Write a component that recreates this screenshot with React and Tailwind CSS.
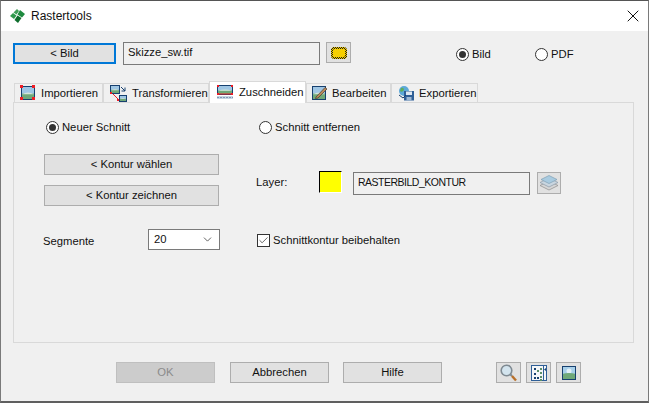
import React from 'react';
import { X, ChevronDown, Check } from 'lucide-react';

function Logo() {
  return (
    <svg width="17" height="16" viewBox="0 0 17 16" className="shrink-0">
      <path d="M8 1 L10 3 L7.5 6.5 L4.5 4.5 Z" fill="#3f9e58" />
      <path d="M11 2 L16 6 L13 9.5 L8.5 6.5 Z" fill="#1d8a3e" />
      <path d="M4 5 L7.5 7.5 L5 11 L1 8 Z" fill="#2f9a4c" />
      <path d="M8.5 7.5 L12.5 10 L9 15 L5.5 12 Z" fill="#0e6d2c" />
    </svg>
  );
}

function Landscape({ x, y, w, h }) {
  return (
    <g>
      <rect x={x} y={y} width={w} height={h} fill="#9fc6e4" />
      <rect x={x} y={y + h * 0.55} width={w} height={h * 0.45} fill="#6fa878" />
      <path d={`M${x} ${y + h * 0.6} Q${x + w / 2} ${y + h * 0.3} ${x + w} ${y + h * 0.6} Z`} fill="#d5e5d8" />
    </g>
  );
}

function ImportIcon() {
  return (
    <svg width="16" height="16" viewBox="0 0 16 16" className="shrink-0">
      <Landscape x={2} y={2} w={12} h={12} />
      <rect x="1.5" y="1.5" width="13" height="13" fill="none" stroke="#17406f" />
      {[[0, 0], [12, 0], [0, 12], [12, 12]].map(([a, b]) => (
        <rect key={`${a}-${b}`} x={a} y={b} width="3" height="3" fill="#ee1c25" />
      ))}
    </svg>
  );
}

function TransformIcon() {
  return (
    <svg width="17" height="17" viewBox="0 0 17 17" className="shrink-0">
      <Landscape x={1} y={1} w={8} h={7} />
      <rect x="0.5" y="0.5" width="9" height="8" fill="none" stroke="#17406f" />
      <Landscape x={10} y={11} w={6} h={5} />
      <rect x="9.5" y="10.5" width="7" height="6" fill="none" stroke="#17406f" />
      <path d="M11 2 L15 6 M15 2.5 V6 H11.5" fill="none" stroke="#17406f" />
      <path d="M3 9 L8 14" stroke="#ee1c25" />
      <rect x="0" y="7" width="2" height="2" fill="#ee1c25" />
      <rect x="7" y="14" width="2" height="2" fill="#ee1c25" />
    </svg>
  );
}

function CropIcon() {
  return (
    <svg width="17" height="15" viewBox="0 0 17 15" className="shrink-0">
      <Landscape x={1} y={1} w={14} h={8} />
      <rect x="0.5" y="0.5" width="15" height="9" fill="none" stroke="#17406f" />
      <path d="M0 9 H16" stroke="#ee1c25" />
      <rect x="0" y="0" width="2" height="2" fill="#ee1c25" />
      <rect x="14" y="0" width="2" height="2" fill="#ee1c25" />
      <rect x="0" y="8" width="2" height="2" fill="#ee1c25" />
      <rect x="14" y="8" width="2" height="2" fill="#ee1c25" />
      <rect x="0" y="11" width="16" height="3" fill="#c5d3e2" />
      <path d="M0 12.5 H16" stroke="#7f97b3" strokeDasharray="2 1" />
    </svg>
  );
}

function EditIcon() {
  return (
    <svg width="16" height="16" viewBox="0 0 16 16" className="shrink-0">
      <Landscape x={1} y={2} w={12} h={12} />
      <rect x="0.5" y="1.5" width="13" height="13" fill="none" stroke="#17406f" />
      <path d="M4 12 L13 2.5 L15 4 L6 13 L3.5 13.5 Z" fill="#b9895a" stroke="#4a3a2c" strokeWidth="0.7" />
    </svg>
  );
}

function ExportIcon() {
  return (
    <svg width="17" height="16" viewBox="0 0 17 16" className="shrink-0">
      <circle cx="6" cy="6" r="5" fill="#5da9d8" />
      <path d="M3 3 Q6 2 6 5 Q4 8 2 6 Z" fill="#5fae5a" />
      <rect x="6" y="6" width="10" height="9.5" fill="#2f5f97" />
      <rect x="8" y="6.5" width="6" height="3.5" fill="#dfe8f1" />
      <rect x="8.5" y="12" width="5" height="3.5" fill="#9db7d2" />
      <path d="M1 10 L5 13 L8 10" fill="none" stroke="#17406f" />
    </svg>
  );
}

function HatchIcon() {
  return (
    <svg width="16" height="12" viewBox="0 0 16 12" className="shrink-0">
      <defs>
        <pattern id="hatch" width="2" height="2" patternUnits="userSpaceOnUse">
          <rect width="2" height="2" fill="#f6cf00" />
          <rect width="1" height="1" fill="#1c1c1c" />
          <rect x="1" y="1" width="1" height="1" fill="#1c1c1c" />
        </pattern>
      </defs>
      <path d="M2 0 H14 L16 2 V10 L14 12 H2 L0 10 V2 Z" fill="url(#hatch)" />
      <path d="M3 2 H13 L14 3 V9 L13 10 H3 L2 9 V3 Z" fill="#f6cf00" />
    </svg>
  );
}

function LayersIcon() {
  return (
    <svg width="20" height="16" viewBox="0 0 20 16" className="shrink-0">
      <path d="M1 10.5 L10 6 L19 10.5 L10 15 Z" fill="#d6d6d6" stroke="#8c8c8c" strokeWidth="0.7" />
      <path d="M1 7.5 L10 3 L19 7.5 L10 12 Z" fill="#c9d6e0" stroke="#8c9aa6" strokeWidth="0.7" />
      <path d="M2 4.5 L10 0.5 L18 4.5 L10 8.5 Z" fill="#a9cbe0" stroke="#7f9fb5" strokeWidth="0.7" />
    </svg>
  );
}

function SearchIcon() {
  return (
    <svg width="17" height="18" viewBox="0 0 17 18" className="shrink-0">
      <circle cx="6.5" cy="6.5" r="5.3" fill="#d3e4ee" stroke="#7f8a92" strokeWidth="1.6" />
      <path d="M10.5 10.5 L12 12" stroke="#7f8a92" strokeWidth="2" />
      <path d="M12 12 L16 16.5" stroke="#b9702a" strokeWidth="2.4" />
    </svg>
  );
}

function ListIcon() {
  const dots = [[3, 3, '#17406f'], [6, 5, '#5b8f6a'], [9, 3, '#5b8f6a'], [3, 8, '#17406f'], [9, 7, '#5b8f6a'], [3, 12, '#17406f'], [6, 12, '#17406f'], [9, 11, '#5b8f6a'], [9, 14, '#5b8f6a']];
  return (
    <svg width="16" height="16" viewBox="0 0 16 16" className="shrink-0">
      <rect x="0.5" y="0.5" width="15" height="15" fill="#f4f6f8" stroke="#2f5f97" />
      <rect x="12" y="1" width="1" height="14" fill="#2f5f97" />
      <path d="M15 3 L13 4.5 L15 6 Z" fill="#17406f" />
      {dots.map(([x, y, c]) => <rect key={`${x}-${y}`} x={x} y={y} width="2" height="2" fill={c} />)}
    </svg>
  );
}

function PictureIcon() {
  return (
    <svg width="14" height="14" viewBox="0 0 14 14" className="shrink-0">
      <rect x="0" y="0" width="14" height="14" fill="#a8d0ea" />
      <circle cx="7" cy="5" r="2.5" fill="#e3f0f7" />
      <path d="M0 8 Q7 6 14 8 V14 H0 Z" fill="#6fa878" />
      <rect x="0.5" y="0.5" width="13" height="13" fill="none" stroke="#17406f" />
    </svg>
  );
}

function Radio({ checked, label, className }) {
  return (
    <div className={`flex items-center h-[14px] ${className}`}>
      <span className="w-[13px] h-[13px] rounded-full border border-[#333] bg-white flex items-center justify-center shrink-0">
        {checked && <span className="w-[7px] h-[7px] rounded-full bg-[#333]" />}
      </span>
      <span className="ml-[3px]">{label}</span>
    </div>
  );
}

function Button({ label, className }) {
  return (
    <div className={`border border-[#adadad] bg-[#e1e1e1] flex items-center justify-center ${className}`}>
      {label}
    </div>
  );
}

function IconButton({ children, className }) {
  return (
    <div className={`border border-[#adadad] bg-[#e1e1e1] flex items-center justify-center ${className}`}>
      {children}
    </div>
  );
}

const tabs = [
  { label: 'Importieren', icon: <ImportIcon />, width: 'w-[89px]', gap: 'gap-[5px] pl-[5px]' },
  { label: 'Transformieren', icon: <TransformIcon />, width: 'w-[106px]', gap: 'gap-[5px] pl-[6px]' },
  { label: 'Zuschneiden', icon: <CropIcon />, width: 'w-[97px]', gap: 'gap-[5px] pl-[7px]', active: true },
  { label: 'Bearbeiten', icon: <EditIcon />, width: 'w-[85px]', gap: 'gap-[4px] pl-[5px]' },
  { label: 'Exportieren', icon: <ExportIcon />, width: 'w-[87px]', gap: 'gap-[4px] pl-[6px]' },
];

export default function App() {
  return (
    <div className="w-[649px] h-[403px] flex flex-col overflow-hidden bg-[#f0f0f0] border-t border-l border-r border-b-2 border-t-[#555] border-l-[#7a7a7a] border-r-[#7a7a7a] border-b-[#5f5f5f] text-[11.25px] text-[#111] font-['Liberation_Sans',sans-serif]">
      {/* Titelleiste */}
      <div className="h-[30px] shrink-0 bg-white flex items-center pl-[8px] pr-[5px]">
        <Logo />
        <span className="ml-[5px] text-[12px]">Rastertools</span>
        <X size={20} strokeWidth={1.2} className="ml-auto" />
      </div>

      {/* Bildauswahl */}
      <div className="flex items-start mt-[11px] pl-[12px] h-[23px] shrink-0">
        <Button label="< Bild" className="w-[103px] h-[21px] mt-[1px] border-2 !border-[#0078d7]" />
        <div className="w-[197px] h-[23px] ml-[7px] border border-[#7a7a7a] bg-[#f0f0f0] pl-[4px] leading-[19px]">Skizze_sw.tif</div>
        <IconButton className="w-[25px] h-[21px] ml-[6px]">
          <HatchIcon />
        </IconButton>
        <Radio checked label="Bild" className="w-[79px] ml-[105px] mt-[5px]" />
        <Radio label="PDF" className="mt-[5px]" />
      </div>

      {/* Tabs */}
      <div className="flex items-end h-[21px] mt-[16px] pl-[13px] shrink-0 relative z-10">
        {tabs.map((tab) => (
          <div
            key={tab.label}
            className={`${tab.width} ${tab.gap} flex items-center border-t border-l border-r border-[#d9d9d9] ${tab.active ? 'h-[22px] -mb-[1px] bg-white' : 'h-[19px] bg-[#f0f0f0]'}`}
          >
            {tab.icon}
            <span>{tab.label}</span>
          </div>
        ))}
      </div>

      {/* Panel */}
      <div className="w-[621px] h-[241px] ml-[12px] shrink-0 border border-[#d9d9d9] flex">
        <div className="w-[242px] shrink-0 flex flex-col pl-[30px]">
          <Radio checked label="Neuer Schnitt" className="mt-[17px] ml-[2px]" />
          <Button label="< Kontur wählen" className="w-[175px] h-[21px] mt-[20px]" />
          <Button label="< Kontur zeichnen" className="w-[175px] h-[21px] mt-[10px]" />
          <div className="flex items-center mt-[23px] -ml-[1px]">
            <span className="w-[105px] mt-[3px]">Segmente</span>
            <div className="w-[72px] h-[21px] border border-[#7a7a7a] bg-white flex items-center justify-between pl-[5px] pr-[5px]">
              <span className="-mt-[1px]">20</span>
              <ChevronDown size={13} strokeWidth={1.4} className="text-[#333]" />
            </div>
          </div>
        </div>

        <div className="flex flex-col">
          <Radio label="Schnitt entfernen" className="mt-[17px] ml-[3px]" />
          <div className="flex items-start mt-[38px]">
            <span className="w-[63px] mt-[2px]">Layer:</span>
            <div className="w-[23px] h-[22px] -mt-[1px] bg-[#ffff00] border border-t-black border-l-black border-r-white border-b-white" />
            <div className="w-[177px] h-[23px] ml-[11px] border border-[#7a7a7a] pl-[4px] leading-[19px] text-[10.5px] tracking-[-0.5px]">RASTERBILD_KONTUR</div>
            <IconButton className="w-[24px] h-[22px] ml-[7px]">
              <LayersIcon />
            </IconButton>
          </div>
          <div className="flex items-center h-[14px] mt-[38px] ml-[1px]">
            <span className="w-[13px] h-[13px] border border-[#333] bg-white flex items-center justify-center">
              <Check size={13} strokeWidth={1.6} className="text-[#333]" />
            </span>
            <span className="ml-[3px]">Schnittkontur beibehalten</span>
          </div>
        </div>
      </div>

      {/* Fusszeile */}
      <div className="flex items-start mt-[19px] pl-[115px]">
        <Button label="OK" className="w-[99px] h-[21px] !bg-[#cccccc] !border-[#bfbfbf] text-[#8a8a8a]" />
        <Button label="Abbrechen" className="w-[99px] h-[21px] ml-[15px]" />
        <Button label="Hilfe" className="w-[99px] h-[21px] ml-[14px]" />
        <IconButton className="w-[25px] h-[21px] ml-[54px]">
          <SearchIcon />
        </IconButton>
        <IconButton className="w-[25px] h-[21px] ml-[5px]">
          <ListIcon />
        </IconButton>
        <IconButton className="w-[25px] h-[21px] ml-[5px]">
          <PictureIcon />
        </IconButton>
      </div>
    </div>
  );
}
